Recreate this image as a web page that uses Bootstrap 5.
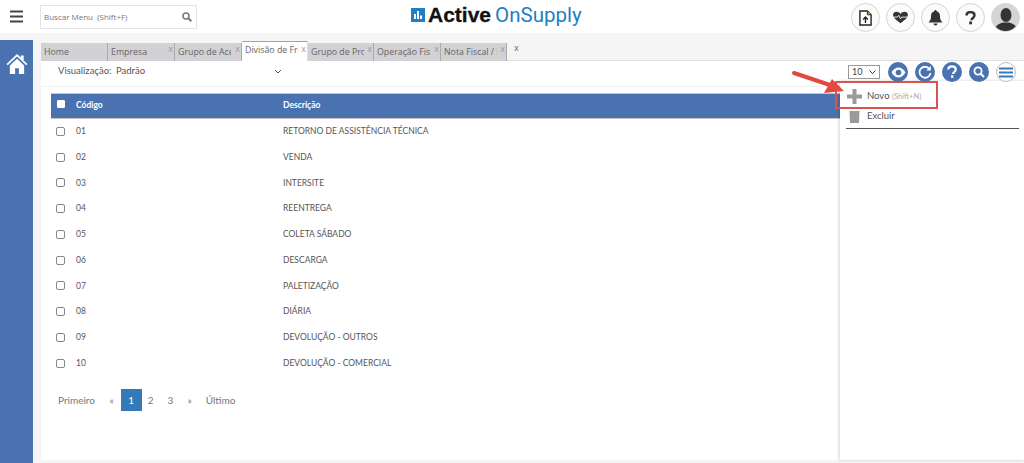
<!DOCTYPE html>
<html lang="pt"><head><meta charset="utf-8"><title>Active OnSupply</title>
<link rel="stylesheet" href="https://cdn.jsdelivr.net/npm/bootstrap@5.3.0/dist/css/bootstrap.min.css">
<style>
html,body{height:463px;overflow:hidden}
body{font-family:Lato,"Open Sans",sans-serif;font-size:9px;color:#555;background:#f5f5f5;position:relative}
.topbar{height:33px;background:#fff;padding-left:10px}
.burger{width:13px;height:13px;margin-right:17px}
.searchbox{width:157px;height:24px;border:1px solid #e4e4e4;padding:0 4px 0 3px;font-family:"Open Sans",sans-serif;font-size:8px;color:#777}
.logo-wrap{position:absolute;left:411px;top:4px;height:22px;gap:3px}
.logo-a{font-family:"Liberation Sans",sans-serif;font-weight:700;font-size:21px;color:#111;line-height:22px;-webkit-text-stroke:.3px #111}
.logo-b{font-family:Roboto,sans-serif;font-size:20.5px;color:#1f7fc0;line-height:22px;margin-left:1px}
.top-icons{position:absolute;left:851px;top:3px;gap:6px}
.circ{width:29px;height:29px;border-radius:50%;border:1px solid #d4d4d4;background:#fbfbfb}
.circ.avatar{background:#d5d5d5;border-color:#d5d5d5;overflow:hidden}
.main-row{height:430px}
.sidenav{width:33px;margin-top:7px;background:#4a72b0;padding-top:14px}
.work{width:991px;padding-left:8px}
.tabstrip{height:28px;padding-top:10px;border-bottom:1px solid #e0e0e0}
.tabi{height:18px;background:#d1d1d6;border-right:1px solid #aaa;font-family:"Open Sans",sans-serif;font-size:8.8px;color:#666;padding:3px 0 0 3px;white-space:nowrap;position:relative}
.tabtxt{display:block;width:53px;overflow:hidden}
.tabi i{font-style:normal;position:absolute;right:1px;top:0;font-size:9px;color:#999;line-height:11px}
.tabi.on{background:#fff;height:20px;margin-top:-2px;border-top:1px solid #8aa6d0;border-right:1px solid #ddd;padding-top:2px;margin-bottom:-1px}
.tabi.on i{top:1px}
.tabx{font-size:9px;padding:0 0 0 7px;color:#666;font-family:"Open Sans",sans-serif;line-height:10px}
.panel{background:#fff;height:399px;position:relative}
.filter{height:26px;padding:0 0 4px 17px;font-size:9.5px;color:#555;border-bottom:1px solid #f2f2f2}
.filter .lb{width:58px}
.filter .vl{width:158px}
.tools{height:22px;position:absolute;right:8px;top:0;gap:7px;z-index:2}
.fakesel{width:32px;height:14px;margin-right:1px;border:1px solid #999;font-size:9px;padding:0 3px;color:#444;line-height:12px}
.blue-c{width:20px;height:20px;border-radius:50%;background:#4a72b0}
.white-c{width:20px;height:20px;border-radius:50%;background:#fff;border:1px solid #bbb}
.listing{position:absolute;left:10px;top:32px;width:789px}
.thead-x{height:25.5px;background:#4a72b0;color:#fff;font-weight:700;font-size:8.5px;border-top:1px solid #b9c9e0;border-bottom:1px solid #c3c3c3}
.cell-a{width:25px;padding-left:5px}
.cell-b{width:207px}
.rowx{height:25.75px;font-size:8.5px;color:#555}
.boxk{width:9px;height:9px;border:1px solid #888;border-radius:2px;display:block;background:#fff}
.thead-x .boxk{border-color:#fff;width:8px;height:8px;margin:-4px 0 0 1px;border-radius:1px}
.pager{margin-top:13px;padding-left:7px;font-size:10px;color:#777;height:22px}
.pager span{padding:0 7px;line-height:22px}
.pager .now{background:#337ab7;color:#fff;width:21px;padding:0;text-align:center;margin-right:-1px}
.pager .pf{padding:0 7.5px 0 0}
.side-actions{position:absolute;left:799px;top:20px;width:184px;height:379px;background:#fff;box-shadow:-1px 0 3px rgba(0,0,0,.18);padding:5px 5px 0 6px;font-size:9.5px;color:#555}
.act{height:20px;gap:5px;padding-left:1px}
.act small{font-size:7.5px;color:#aaa}
.trashi{margin-top:-3px}
.rule{border-bottom:1px solid #555;height:3px}
.redbox{position:absolute;left:835px;top:81px;width:103px;height:28px;border:2px solid #d9534f}
.arrow{position:absolute;left:790px;top:68px}
</style></head><body>
<header class="topbar d-flex align-items-center">
  <svg class="burger" viewBox="0 0 13 13"><path d="M0 1.500h13M0 6.500h13M0 11.500h13" stroke="#444" stroke-width="2"/></svg>
  <div class="searchbox d-flex align-items-center justify-content-between"><span>Buscar Menu&nbsp; (Shift+F)</span>
  <svg width="10" height="10" viewBox="0 0 10 10"><circle cx="4" cy="4" r="3" fill="none" stroke="#777" stroke-width="1.500"/><path d="M6.300 6.300 9.300 9.300" stroke="#777" stroke-width="2"/></svg></div>
  <div class="logo-wrap d-flex align-items-center">
    <svg width="14" height="14" viewBox="0 0 14 14"><rect width="14" height="14" fill="#1f7fc0"/><path d="M3 6h2v5H3zM6 3h2v8H6zM9 7.500h2V11H9z" fill="#fff"/></svg>
    <span class="logo-a">Active</span><span class="logo-b">OnSupply</span>
  </div>
  <div class="top-icons d-flex">
    <div class="circ d-flex align-items-center justify-content-center"><svg width="13" height="16" viewBox="0 0 14 17"><path d="M1 1h8l4 4v11H1z" fill="#fff" stroke="#222" stroke-width="1.500"/><path d="M9 1v4h4" fill="#e0a040" stroke="#222"/><path d="M7 14V8M4.500 10 7 7.500 9.500 10" stroke="#222" stroke-width="1.500" fill="none"/></svg></div>
    <div class="circ d-flex align-items-center justify-content-center"><svg width="17" height="13" viewBox="0 0 19 15"><path d="M9.500 14C4 10 1 7.500 1 4.500 1 2.500 2.500 1 4.800 1c2 0 3.600 1 4.700 2.500C10.600 2 12.200 1 14.200 1 16.500 1 18 2.500 18 4.500c0 3-3 5.500-8.500 9.500z" fill="#333"/><path d="M1 7h5l1.500-2 2 4 1.500-2h7" stroke="#fff" stroke-width="1" fill="none"/></svg></div>
    <div class="circ d-flex align-items-center justify-content-center"><svg width="15" height="18" viewBox="0 0 15 17"><path d="M7.500 0.500c.8 0 1.200.6 1.200 1.300C11 2.400 12 4.300 12 7c0 3 1 4.500 2.500 6h-14C2 11.500 3 10 3 7c0-2.700 1-4.600 3.300-5.200 0-.7.400-1.300 1.200-1.300z" fill="#333"/><path d="M5.500 14h4a2 2 0 0 1-4 0z" fill="#333"/></svg></div>
    <div class="circ d-flex align-items-center justify-content-center"><svg width="11" height="14" viewBox="0 0 12 16"><path d="M1.500 5C1.500 2.700 3.500 1.300 6 1.300s4.500 1.400 4.500 3.600c0 3.200-3.300 3-3.300 5.600" fill="none" stroke="#333" stroke-width="2.800"/><rect x="4.500" y="12" width="3.200" height="3.200" fill="#333"/></svg></div>
    <div class="circ avatar d-flex align-items-end justify-content-center"><svg width="22" height="25" viewBox="0 0 22 25"><ellipse cx="11" cy="9" rx="5.500" ry="7" fill="#333"/><path d="M0 25c0-6 4-7 8-8.500h6C18 18 22 19 22 25z" fill="#333"/></svg></div>
  </div>
</header>
<div class="main-row d-flex">
  <nav class="sidenav d-flex justify-content-center align-items-start">
    <svg width="22" height="20" viewBox="0 0 22 21"><path d="M0 10.500 11 0l4 3.800V1.500h3v5.200l4 3.800-1.300 1.300L11 2.700 1.300 11.800z" fill="#fff"/><path d="M3.500 12 11 5l7.500 7v9H13v-6H9v6H3.500z" fill="#fff"/></svg>
  </nav>
  <div class="work">
    <div class="tabstrip d-flex">
      <div class="tabi" style="width:67px"><span class="tabtxt">Home</span></div>
      <div class="tabi" style="width:67px"><span class="tabtxt">Empresa</span><i>x</i></div>
      <div class="tabi" style="width:67px"><span class="tabtxt">Grupo de Acesso</span><i>x</i></div>
      <div class="tabi on" style="width:66px"><span class="tabtxt">Divisão de Frete</span><i>x</i></div>
      <div class="tabi" style="width:66px"><span class="tabtxt">Grupo de Produto</span><i>x</i></div>
      <div class="tabi" style="width:67px"><span class="tabtxt">Operação Fiscal</span><i>x</i></div>
      <div class="tabi" style="width:66px"><span class="tabtxt">Nota Fiscal / Pedido</span><i>x</i></div>
      <div class="tabx">x</div>
    </div>
    <div class="panel">
      <div class="filter d-flex align-items-center"><span class="lb">Visualização:</span><span class="vl">Padrão</span>
        <svg width="8" height="5" viewBox="0 0 8 5"><path d="M1 1l3 3 3-3" stroke="#555" fill="none"/></svg></div>
      <div class="tools d-flex align-items-center">
        <div class="fakesel d-flex justify-content-between align-items-center">10<svg width="7" height="4" viewBox="0 0 7 4"><path d="M.5.500l3 3 3-3" stroke="#333" fill="none"/></svg></div>
        <div class="blue-c d-flex align-items-center justify-content-center"><svg width="15" height="11" viewBox="0 0 15 11"><path d="M.5 5.500C2.500 2 5 .5 7.500.5s5 1.500 7 5c-2 3.500-4.500 5-7 5s-5-1.500-7-5z" fill="#fff"/><circle cx="7.500" cy="5.500" r="2.800" fill="#4a72b0"/></svg></div>
        <div class="blue-c d-flex align-items-center justify-content-center"><svg width="14" height="14" viewBox="0 0 14 14"><path d="M11.500 4A5.500 5.500 0 1 0 12.500 8" fill="none" stroke="#fff" stroke-width="1.800"/><path d="M12.800 1v4.500H8.300z" fill="#fff"/></svg></div>
        <div class="blue-c d-flex align-items-center justify-content-center"><svg width="10" height="14" viewBox="0 0 12 16"><path d="M1.500 5C1.500 2.700 3.500 1.300 6 1.300s4.500 1.400 4.500 3.600c0 3.200-3.300 3-3.300 5.600" fill="none" stroke="#fff" stroke-width="2.600"/><rect x="4.900" y="12" width="2.800" height="3" fill="#fff"/></svg></div>
        <div class="blue-c d-flex align-items-center justify-content-center"><svg width="12" height="12" viewBox="0 0 12 12"><circle cx="5" cy="5" r="3.600" fill="none" stroke="#fff" stroke-width="1.800"/><path d="M7.800 7.800 11 11" stroke="#fff" stroke-width="2.200"/></svg></div>
        <div class="white-c d-flex align-items-center justify-content-center"><svg width="14" height="11" viewBox="0 0 14 11"><path d="M0 1.500h14M0 5.500h14M0 9.500h14" stroke="#337ab7" stroke-width="2"/></svg></div>
      </div>
      <div class="listing">
        <div class="thead-x d-flex align-items-center"><div class="cell-a"><span class="boxk"></span></div><div class="cell-b">Código</div><div>Descrição</div></div>
        <div class="rowx d-flex align-items-center"><div class="cell-a"><span class="boxk"></span></div><div class="cell-b">01</div><div>RETORNO DE ASSISTÊNCIA TÉCNICA</div></div>
        <div class="rowx d-flex align-items-center"><div class="cell-a"><span class="boxk"></span></div><div class="cell-b">02</div><div>VENDA</div></div>
        <div class="rowx d-flex align-items-center"><div class="cell-a"><span class="boxk"></span></div><div class="cell-b">03</div><div>INTERSITE</div></div>
        <div class="rowx d-flex align-items-center"><div class="cell-a"><span class="boxk"></span></div><div class="cell-b">04</div><div>REENTREGA</div></div>
        <div class="rowx d-flex align-items-center"><div class="cell-a"><span class="boxk"></span></div><div class="cell-b">05</div><div>COLETA SÁBADO</div></div>
        <div class="rowx d-flex align-items-center"><div class="cell-a"><span class="boxk"></span></div><div class="cell-b">06</div><div>DESCARGA</div></div>
        <div class="rowx d-flex align-items-center"><div class="cell-a"><span class="boxk"></span></div><div class="cell-b">07</div><div>PALETIZAÇÃO</div></div>
        <div class="rowx d-flex align-items-center"><div class="cell-a"><span class="boxk"></span></div><div class="cell-b">08</div><div>DIÁRIA</div></div>
        <div class="rowx d-flex align-items-center"><div class="cell-a"><span class="boxk"></span></div><div class="cell-b">09</div><div>DEVOLUÇÃO - OUTROS</div></div>
        <div class="rowx d-flex align-items-center"><div class="cell-a"><span class="boxk"></span></div><div class="cell-b">10</div><div>DEVOLUÇÃO - COMERCIAL</div></div>
        <div class="pager d-flex"><span class="pf">Primeiro</span><span>«</span><span class="now">1</span><span>2</span><span>3</span><span>»</span><span>Último</span></div>
      </div>
      <aside class="side-actions">
        <div class="act d-flex align-items-center"><svg width="15" height="15" viewBox="0 0 15 15"><path d="M5.500 0h4v5.500H15v4H9.500V15h-4V9.500H0v-4h5.500z" fill="#9a9a9a"/></svg><span>Novo <small>(Shift+N)</small></span></div>
        <div class="act d-flex align-items-center"><svg class="trashi" width="15" height="16" viewBox="0 0 15 16"><path d="M2 .5h11v1.500H2zM2.500 4h10L12 16H3z" fill="#9a9a9a"/></svg><span>Excluir</span></div>
        <div class="rule"></div>
      </aside>
    </div>
  </div>
</div>
<div class="redbox"></div>
<svg class="arrow" width="58" height="30" viewBox="0 0 58 30"><path d="M4 5 40 17" stroke="#e2493f" stroke-width="4" stroke-linecap="round"/><path d="M54 23 34 25 42 11z" fill="#e2493f"/></svg>
</body></html>
